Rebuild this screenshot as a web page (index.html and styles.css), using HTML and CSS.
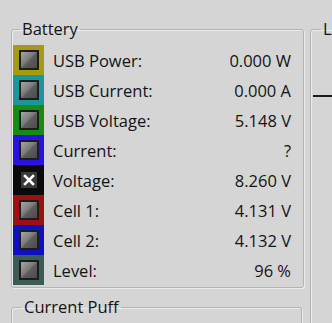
FILE: index.html
```html
<!DOCTYPE html>
<html>
<head>
<meta charset="utf-8">
<link rel="stylesheet" href="styles.css">
</head>
<body>
<div class="app">
  <div class="left">
    <fieldset class="group battery">
      <legend>Battery</legend>
      <div class="rows">
        <div class="row"><span class="sw sw-usbp"><i class="btn"></i></span><span class="lbl">USB Power:</span><span class="val">0.000 W</span></div>
        <div class="row"><span class="sw sw-usbc"><i class="btn"></i></span><span class="lbl">USB Current:</span><span class="val">0.000 A</span></div>
        <div class="row"><span class="sw sw-usbv"><i class="btn"></i></span><span class="lbl">USB Voltage:</span><span class="val">5.148 V</span></div>
        <div class="row"><span class="sw sw-cur"><i class="btn"></i></span><span class="lbl">Current:</span><span class="val">?</span></div>
        <div class="row"><span class="sw sw-volt"><i class="btn btn-x"><svg viewBox="0 0 12 12" width="12" height="12"><path d="M2 2 L10 10 M10 2 L2 10" stroke="#fff" stroke-width="2.6" stroke-linecap="square"/></svg></i></span><span class="lbl">Voltage:</span><span class="val">8.260 V</span></div>
        <div class="row"><span class="sw sw-c1"><i class="btn"></i></span><span class="lbl">Cell 1:</span><span class="val">4.131 V</span></div>
        <div class="row"><span class="sw sw-c2"><i class="btn"></i></span><span class="lbl">Cell 2:</span><span class="val">4.132 V</span></div>
        <div class="row"><span class="sw sw-lvl"><i class="btn"></i></span><span class="lbl">Level:</span><span class="val">96 %</span></div>
      </div>
    </fieldset>
    <fieldset class="group puff">
      <legend>Current Puff</legend>
      <div class="puff-body"></div>
    </fieldset>
  </div>
  <fieldset class="group right">
    <legend>L</legend>
    <div class="axis"></div>
  </fieldset>
</div>
</body>
</html>
```

FILE: styles.css
```css
html, body {
  margin: 0;
  height: 100%;
  overflow: hidden;
  background: #d5d5d5;
}

body {
  font-family: "Open Sans", "Noto Sans", sans-serif;
  font-size: 16.5px;
  color: #141414;
}

.app {
  display: flex;
  align-items: flex-start;
  padding-top: 19px;
  height: 323px;
  box-sizing: border-box;
}

.left {
  flex: 0 0 304px;
  padding-left: 11px;
  box-sizing: border-box;
  display: flex;
  flex-direction: column;
}

.group {
  margin: 0;
  min-width: 0;
  border: 1px solid #b3b3b3;
  border-radius: 3px;
  box-shadow: inset 1px 1px 0 #ececec, 1px 1px 0 #ececec;
}

.group legend {
  padding: 0 2px;
  margin-left: 7px;
  line-height: 20px;
}

.battery {
  padding: 6px 12px 2px 1px;
}

.rows {
  display: flex;
  flex-direction: column;
}

.row {
  display: flex;
  align-items: center;
  height: 30px;
}

.sw {
  width: 31px;
  height: 30px;
  display: flex;
  align-items: center;
  justify-content: center;
  flex: 0 0 auto;
}

.sw-usbp { background: #a39c12; }
.sw-usbc { background: #1c9696; }
.sw-usbv { background: #168c16; }
.sw-cur  { background: #2a12e2; }
.sw-volt { background: #0a0a0a; }
.sw-c1   { background: #9c1014; }
.sw-c2   { background: #1010c0; }
.sw-lvl  { background: #3a5b56; }

.btn {
  width: 16px;
  height: 16px;
  border: 2px solid #1c1c1c;
  background: linear-gradient(135deg, #a5a5a5 0%, #7c7c7c 45%, #5c5c5c 55%, #4c4c4c 100%);
  display: flex;
  align-items: center;
  justify-content: center;
}

.btn-x {
  background: #3a3a3a;
  border-color: #0a0a0a;
}

.lbl {
  margin-left: 9px;
  flex: 1;
}

.val {
  text-align: right;
}

.puff {
  width: 291px;
  box-sizing: border-box;
  margin-top: 9px;
  padding: 0 1px;
}

.puff legend {
  margin-left: 9px;
}

.puff-body {
  height: 60px;
}

.right {
  flex: 0 0 200px;
  margin-left: 6px;
  padding: 0 4px 0 2px;
  height: 320px;
  box-sizing: border-box;
}

.right legend {
  margin-left: 8px;
}

.axis {
  margin-top: 56px;
  height: 2px;
  background: #1a1a1a;
  width: 60px;
}
```
